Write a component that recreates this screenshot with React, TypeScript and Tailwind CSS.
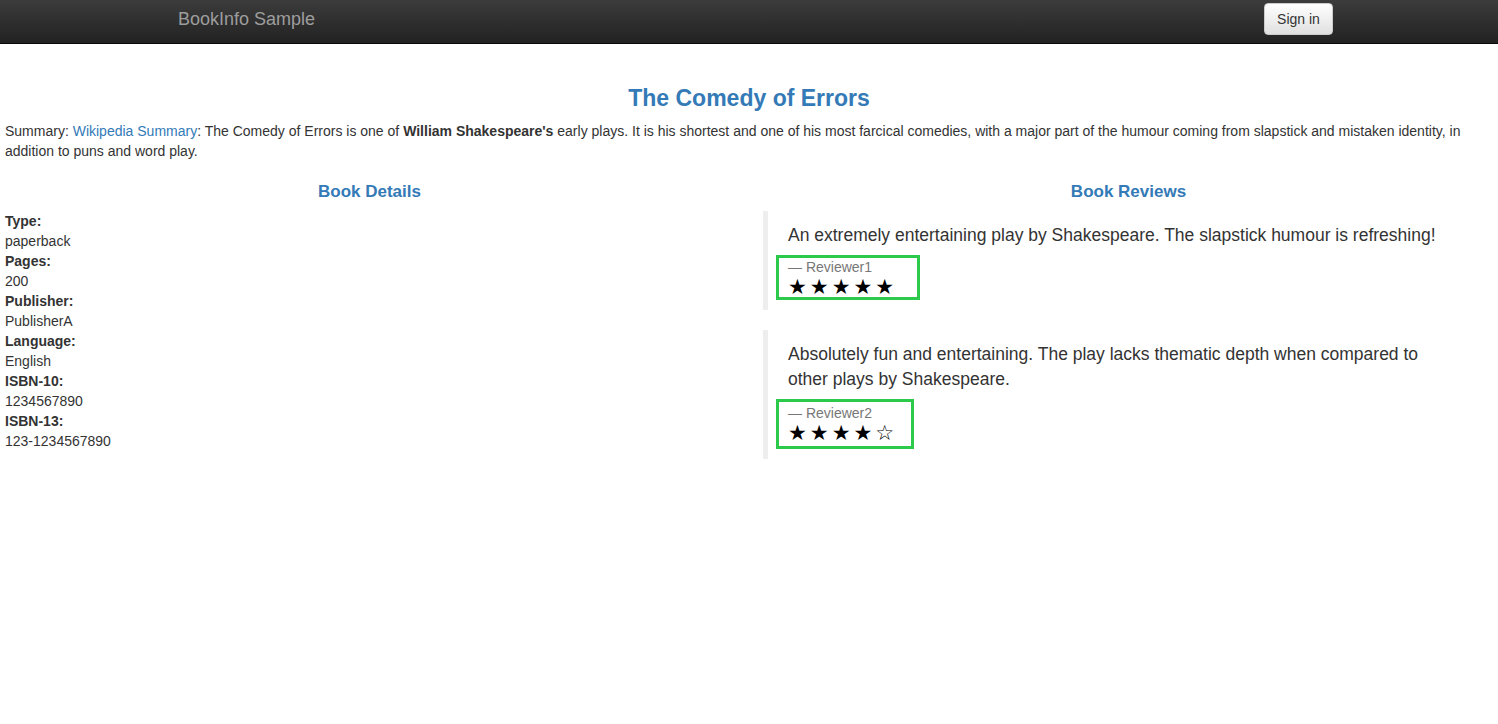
import React from 'react';

const font = { fontFamily: '"Liberation Sans", Arial, Helvetica, sans-serif' };

const details: [string, string][] = [
  ['Type:', 'paperback'],
  ['Pages:', '200'],
  ['Publisher:', 'PublisherA'],
  ['Language:', 'English'],
  ['ISBN-10:', '1234567890'],
  ['ISBN-13:', '123-1234567890'],
];

function Review({ text, reviewer, stars, boxClass }: { text: string; reviewer: string; stars: string; boxClass: string }) {
  return (
    <div className="border-l-[5px] border-[#eeeeee] pl-[20px] pr-[36px] pt-[12px] pb-[10px] mb-[20px]">
      <p className="text-[17.5px] leading-[25px] text-[#333]">{text}</p>
      <div className={`mt-[7px] -ml-[12px] border-[3px] border-[#2dc94a] pl-[9px] ${boxClass}`}>
        <div className="pt-px text-[14px] leading-[17px] text-[#777]">— {reviewer}</div>
        <div className="text-[21px] leading-[22px] text-black tracking-[3px]" style={{ fontFamily: '"DejaVu Sans", sans-serif' }}>
          {stars}
        </div>
      </div>
    </div>
  );
}

export default function App() {
  return (
    <div className="min-h-screen bg-white text-[#333] text-[14px]" style={font}>
      {/* navbar */}
      <div className="h-[44px] bg-gradient-to-b from-[#3c3c3c] to-[#222222] border-b border-[#080808]">
        <div className="w-[1170px] mx-auto flex items-start justify-between">
          <div className="pl-[14px] pt-[9px] text-[18px] leading-[20px] text-[#9d9d9d]">BookInfo Sample</div>
          <button className="mt-[3px] mr-px h-[32px] w-[69px] rounded-[4px] border border-[#cccccc] bg-gradient-to-b from-white to-[#e0e0e0] text-[14px] text-[#333]">
            Sign in
          </button>
        </div>
      </div>

      <div className="px-[5px]">
        <h3 className="mt-[41px] text-center text-[23px] leading-[26px] font-bold text-[#337ab7]">The Comedy of Errors</h3>
        <p className="mt-[10px] leading-[20px]">
          Summary: <span className="text-[#337ab7]">Wikipedia Summary</span>: The Comedy of Errors is one of{' '}
          <b>William Shakespeare's</b> early plays. It is his shortest and one of his most farcical comedies, with a major part
          of the humour coming from slapstick and mistaken identity, in addition to puns and word play.
        </p>

        <div className="mt-[21px] flex gap-[30px]">
          <div className="flex-1">
            <h4 className="text-center text-[17px] leading-[20px] font-bold text-[#337ab7]">Book Details</h4>
            <dl className="mt-[9px] leading-[20px]">
              {details.map(([k, v]) => (
                <React.Fragment key={k}>
                  <dt className="font-bold">{k}</dt>
                  <dd>{v}</dd>
                </React.Fragment>
              ))}
            </dl>
          </div>
          <div className="flex-1">
            <h4 className="text-center text-[17px] leading-[20px] font-bold text-[#337ab7]">Book Reviews</h4>
            <div className="mt-[9px] -ml-px">
              <Review
                text="An extremely entertaining play by Shakespeare. The slapstick humour is refreshing!"
                reviewer="Reviewer1"
                stars="★★★★★"
                boxClass="w-[144px] h-[45px]"
              />
              <Review
                text="Absolutely fun and entertaining. The play lacks thematic depth when compared to other plays by Shakespeare."
                reviewer="Reviewer2"
                stars="★★★★☆"
                boxClass="w-[138px] h-[50px] pt-[2px]"
              />
            </div>
          </div>
        </div>
      </div>
    </div>
  );
}
